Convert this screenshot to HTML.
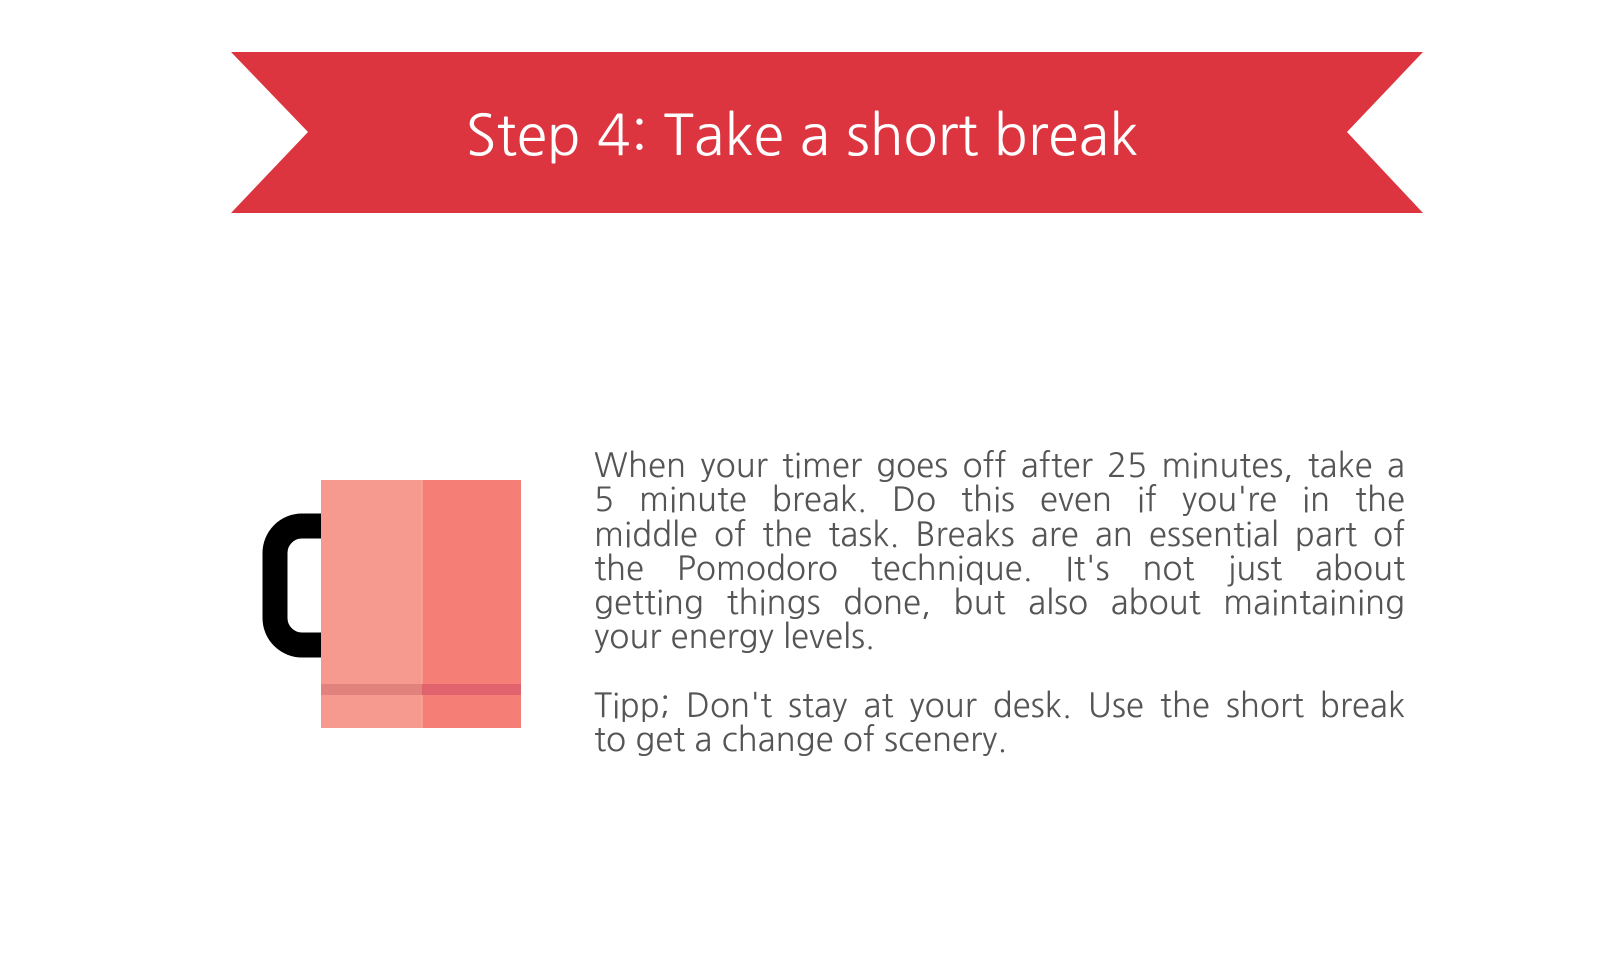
<!DOCTYPE html>
<html><head><meta charset="utf-8"><style>
html,body{margin:0;padding:0;background:#fff;width:1600px;height:980px;overflow:hidden;position:relative}
.t{position:absolute;left:0;width:1604px;top:101px;text-align:center;font-family:"NanumGothic","Liberation Sans",sans-serif;font-size:56px;color:#fff;line-height:70px;white-space:nowrap}
.p{position:absolute;left:594px;width:811px;font-family:"NanumGothic","Liberation Sans",sans-serif;font-size:33px;line-height:34.3px;color:#555;margin:0}
.p div{text-align:justify;text-align-last:justify;white-space:nowrap}
.p div.l{text-align-last:left}
</style></head><body>
<svg width="1600" height="980" style="position:absolute;left:0;top:0">
<polygon points="231,52 1423,52 1347,132 1423,213 231,213 308,132" fill="#dc3540"/>
<path d="M321,526 H302 A27,27 0 0 0 275,553 V618 A27,27 0 0 0 302,645 H321" fill="none" stroke="#000" stroke-width="25"/>
<rect x="321" y="480" width="101" height="248" fill="#f6998f"/>
<rect x="422" y="480" width="99" height="248" fill="#f57f77"/>
<rect x="421.5" y="480" width="1" height="248" fill="#f9b0a8"/>
<rect x="321" y="684" width="101" height="11" fill="#e2827c"/>
<rect x="422" y="684" width="99" height="11" fill="#e0636d"/>
</svg>
<div class="t">Step 4: Take a short break</div>
<div class="p" style="top:449px">
<div>When your timer goes off after 25 minutes, take a</div>
<div>5 minute break. Do this even if you're in the</div>
<div>middle of the task. Breaks are an essential part of</div>
<div>the Pomodoro technique. It's not just about</div>
<div>getting things done, but also about maintaining</div>
<div class="l">your energy levels.</div>
</div>
<div class="p" style="top:689px">
<div>Tipp; Don't stay at your desk. Use the short break</div>
<div class="l">to get a change of scenery.</div>
</div>
</body></html>
